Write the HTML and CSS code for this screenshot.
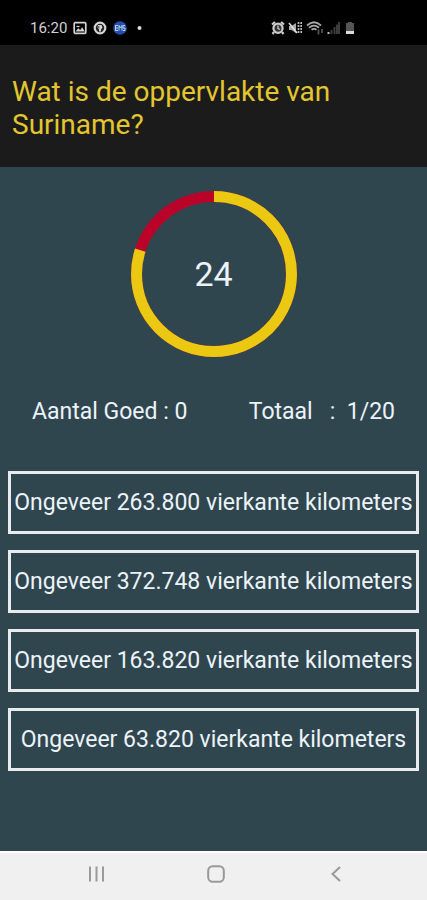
FILE: index.html
```html
<!DOCTYPE html>
<html lang="nl">
<head>
<meta charset="utf-8">
<meta name="viewport" content="width=device-width, initial-scale=1">
<title>Quiz Suriname</title>
<link rel="stylesheet" href="styles.css">
</head>
<body>
<div class="status">
  <div class="status-group">
    <span class="time">16:20</span>
    <svg class="icon" width="14" height="14" viewBox="0 0 14 14" aria-hidden="true">
      <rect x="1.2" y="1.7" width="11.6" height="10.6" rx="1" fill="none" stroke="#d2d2d2" stroke-width="1.7"/>
      <path d="M2.5 10.5l2.7-3.3 2 1.8 2-2.7 2.6 4.2z" fill="#d2d2d2"/>
      <path d="M3.5 5.500h3" stroke="#d2d2d2" stroke-width="1.3"/>
    </svg>
    <svg class="icon" width="14" height="14" viewBox="0 0 14 14" aria-hidden="true">
      <circle cx="7" cy="7" r="5.300" fill="#222" stroke="#d6d6d6" stroke-width="2.200"/>
      <path d="M5 4h3.500l1 2.500-1.500 2v2H6v-2L4.500 6.500z" fill="#d6d6d6"/>
      <path d="M5.800 5v2.500" stroke="#333"/>
    </svg>
    <svg class="icon" width="14" height="14" viewBox="0 0 14 14" aria-hidden="true">
      <circle cx="7" cy="7" r="6.800" fill="#2450a8"/>
      <path d="M2 4.500h3M2 7h3M2 9.500h3M2.500 4.500v5M6 9.500v-5l1.500 2.500L9 4.500v5M12 4.500h-2V7h2v2.500h-2" stroke="#bdd0f2" fill="none"/>
    </svg>
    <svg class="icon" width="14" height="14" viewBox="0 0 14 14" aria-hidden="true">
      <circle cx="6.500" cy="7" r="2" fill="#ddd"/>
    </svg>
  </div>
  <div class="status-group tight">
    <svg width="14" height="14" viewBox="0 0 14 14" aria-hidden="true">
      <path d="M1 3.500L4 1M13 3.500L10 1M3 11l-1.500 2M11 11l1.500 2" stroke="#ccc" stroke-width="2.200"/>
      <circle cx="7" cy="7.300" r="4.600" fill="#333" stroke="#ccc" stroke-width="2.200"/>
      <path d="M7 4.500v3l2 1" stroke="#ccc" stroke-width="1.300" fill="none"/>
    </svg>
    <svg width="14" height="14" viewBox="0 0 14 14" aria-hidden="true">
      <path d="M1 5h2.500L8 2v10L3.500 9H1z" fill="#aaa"/>
      <path d="M1 2l8 10" stroke="#ddd" stroke-width="1.600"/>
      <path d="M10.500 1v12M13.200 1v12" stroke="#bbb" stroke-width="1.700" stroke-dasharray="2 1"/>
    </svg>
    <svg width="18" height="14" viewBox="0 0 18 14" aria-hidden="true">
      <path d="M2 4.500Q9-2 16 4.500M4 6.800Q9 2.500 14 6.800M6.500 8.800Q9 7 11.500 8.800" fill="none" stroke="#a8a8a8" stroke-width="1.800"/>
      <path d="M13.500 8.500v5M17 8v4" stroke="#505050" stroke-width="1.800"/>
    </svg>
    <svg width="14" height="14" viewBox="0 0 14 14" aria-hidden="true">
      <path d="M2.500 11v2" stroke="#bbb" stroke-width="2"/>
      <path d="M5.500 9v4M8.500 6v7M11 3.500v9.500M13 1v12" stroke="#3c3c3c" stroke-width="2"/>
    </svg>
    <svg width="14" height="14" viewBox="0 0 14 14" aria-hidden="true">
      <path d="M5 1h4v1h2v8H3V2h2z" fill="#555"/>
      <path d="M3 10h8v3H3z" fill="#ddd"/>
    </svg>
  </div>
</div>
<header class="question">
  <h1>Wat is de oppervlakte van Suriname?</h1>
</header>
<main class="quiz">
  <div class="timer" role="timer">
    <svg class="ring" viewBox="0 0 166 166" aria-hidden="true">
      <circle cx="83" cy="83" r="77.500" fill="none" stroke="#b90328" stroke-width="11"/>
      <circle cx="83" cy="83" r="77.500" fill="none" stroke="#ebc913" stroke-width="11" pathLength="30" stroke-dasharray="24 6" transform="rotate(-90 83 83)"/>
    </svg>
    <span class="seconds">24</span>
  </div>
  <div class="score">
    <span>Aantal Goed : 0</span>
    <span class="total">Totaal   :  1/20</span>
  </div>
  <div class="answers">
    <button type="button">Ongeveer 263.800 vierkante kilometers</button>
    <button type="button">Ongeveer 372.748 vierkante kilometers</button>
    <button type="button">Ongeveer 163.820 vierkante kilometers</button>
    <button type="button">Ongeveer 63.820 vierkante kilometers</button>
  </div>
</main>
<nav class="system-nav">
  <button type="button" aria-label="Recente apps">
    <svg width="20" height="20" viewBox="0 0 20 20"><path d="M4 2.500v15M10.500 2.500v15M17 2.500v15" stroke="#999" stroke-width="2"/></svg>
  </button>
  <button type="button" aria-label="Startscherm">
    <svg width="20" height="20" viewBox="0 0 20 20"><rect x="2.200" y="2.200" width="15.600" height="15.600" rx="4.500" fill="none" stroke="#999" stroke-width="2"/></svg>
  </button>
  <button type="button" aria-label="Terug">
    <svg width="20" height="20" viewBox="0 0 20 20"><path d="M14 3L6.500 10l7.500 7" fill="none" stroke="#999" stroke-width="2"/></svg>
  </button>
</nav>
</body>
</html>
```
FILE: styles.css
```css
* {
  box-sizing: border-box;
}

body {
  margin: 0;
  min-height: 100vh;
  display: flex;
  flex-direction: column;
  background: #30464e;
  color: #ebf3fa;
  font-family: Roboto, "Liberation Sans", sans-serif;
}

button {
  font: inherit;
  color: inherit;
  background: none;
  border: 0;
  border-radius: 0;
  padding: 0;
}

svg {
  display: block;
}

.status {
  display: flex;
  align-items: center;
  justify-content: space-between;
  padding: 18px 70px 7px 30px;
  background: #000;
}

.status-group {
  display: flex;
  align-items: center;
  gap: 6px;
}

.tight {
  gap: 3px;
}

.time {
  font-size: 15px;
  line-height: 20px;
  color: #d0d0d0;
}

.question {
  background: #1b1b1b;
  padding: 30px 12px 26px;
}

.question h1 {
  margin: 0;
  font-size: 28px;
  font-weight: 400;
  line-height: 33px;
  color: #e3c62f;
}

.quiz {
  flex: 1;
  padding: 24px 8px;
}

.timer {
  display: grid;
  place-items: center;
  width: 166px;
  margin: 0 auto;
}

.ring,
.seconds {
  grid-area: 1 / 1;
}

.ring {
  width: 100%;
}

.seconds {
  font-size: 34px;
  line-height: 40px;
}

.score {
  display: flex;
  justify-content: space-between;
  padding: 0 24px;
  margin: 41px 0 45px;
  font-size: 23px;
  line-height: 28px;
}

.total {
  white-space: pre;
}

.answers {
  display: grid;
  gap: 16px;
}

.answers button {
  min-height: 63px;
  border: 3px solid #e8ecee;
  font-size: 23px;
  line-height: 28px;
  white-space: nowrap;
}

.system-nav {
  display: flex;
  padding: 11px 31px 16px 36px;
  background: #f0f0f0;
  border-top: 2px solid #fff;
}

.system-nav button {
  flex: 1;
  display: flex;
  justify-content: center;
}
```
